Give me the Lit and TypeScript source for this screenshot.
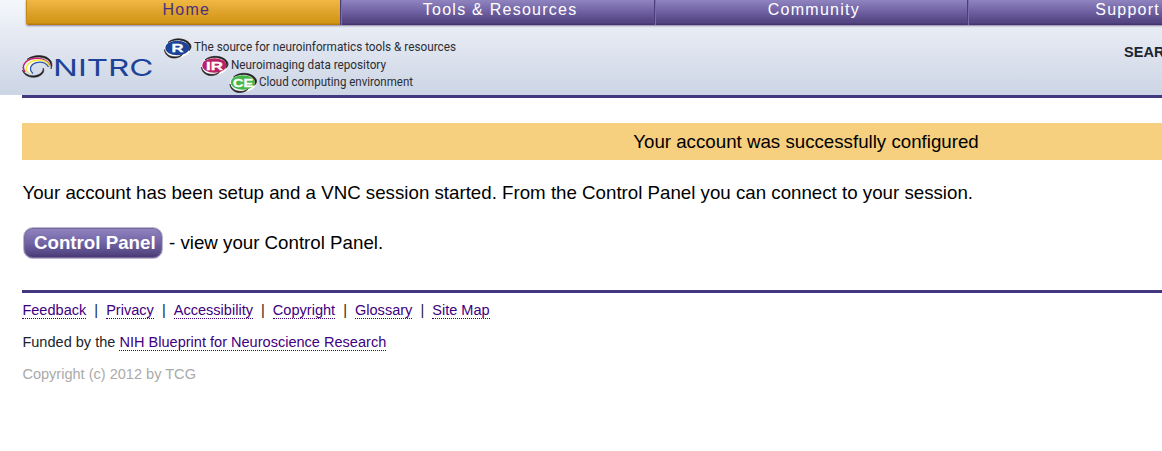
import { LitElement, html, css, svg } from "lit";
import { customElement } from "lit/decorators.js";

const TABS = ["Home", "Tools & Resources", "Community", "Support"];
const LINKS = ["Feedback", "Privacy", "Accessibility", "Copyright", "Glossary", "Site Map"];

@customElement("nitrc-logo")
class NitrcLogo extends LitElement {
  static styles = css`
    :host { display: block; height: 60px; }
    svg { display: block; }
    .word { font: 400 23.500px Inter, "Liberation Sans", sans-serif; fill: #1d4297; }
    .badge { font: 700 11.500px "Liberation Sans", sans-serif; fill: #fff; stroke: #fff; stroke-width: 0.3; }
    .tag { font: 400 13.500px Roboto, "Liberation Sans", sans-serif; fill: #2b2d35; }
  `;

  badge(x: number, y: number, label: string, color: string, width: number) {
    return svg`<g transform="translate(${x} ${y})">
      <ellipse cx="13.6" cy="10.3" rx="13.2" ry="9" fill="#fff"/>
      <path d="M4 4.500C9 -.3 19 -.3 24 3.800C27.800 6.800 27.800 9.800 25 12.800C26.300 9.500 25.500 6.500 21.500 3.800C16 .9 9 1.500 4 4.500Z" fill="#221f20" stroke="#221f20" stroke-width=".7"/>
      <path d="M.4 11.500C1 17.500 6 20.600 11.500 20C15.500 19.500 18.500 17.500 19 15.500C16.500 18.600 12.500 19.300 8.500 18.600C4 17.800 1.500 15 .4 11.500Z" fill="#221f20" stroke="#221f20" stroke-width=".6"/>
      <ellipse cx="13.300" cy="10" rx="12" ry="7.300" fill="${color}"/>
      <text class="badge" x="${13.6 - width / 2}" y="14" textLength="${width}" lengthAdjust="spacingAndGlyphs">${label}</text>
    </g>`;
  }

  render() {
    return html`<svg width="440" height="60" viewBox="22 35 440 60" role="img" aria-label="NITRC">
      <g fill="none">
        <path d="M27 72C22.500 66 27 59.500 37 58.500C43 58 48 60.500 50 65L46 64C42 61.500 35 62 32 65C30 68 31 71 34 73.500Z" fill="#fff"/>
        <path d="M27 59.500C32 55 43 54 48.500 58.500C52.500 61.500 52.500 65 51 69C51.500 64 50 61 46.500 59C41 56 33 56.500 27 59.500Z" fill="#221f20" stroke="#221f20" stroke-width=".6"/>
        <path d="M25 72C20.500 66 25.500 59.500 34 58.500C42 57.500 48 60.500 50 66" stroke="#c32172" stroke-width="1.400"/>
        <path d="M28.500 73C23.500 68 28 61 37 60.200C43 59.700 47.500 62 49.500 66" stroke="#f4e63a" stroke-width="1.500"/>
        <path d="M33 73.500C28 69 31 63.200 38 62.300C43 61.800 46.500 63.500 48.500 67" stroke="#2454a5" stroke-width="1.300"/>
        <path d="M22.300 70C24 76 31 78.200 36.500 77C42 75.800 45.500 71.500 43 68C43.500 71.500 40.500 74.500 35.500 75.600C30.500 76.500 25 74.500 22.300 70Z" fill="#221f20" stroke="#221f20" stroke-width=".5"/>
      </g>
      <text class="word" x="53" y="75.500" textLength="100.500" lengthAdjust="spacingAndGlyphs">NITRC</text>
      ${this.badge(164, 38, "R", "#1d4297", 12)}
      ${this.badge(201, 55.5, "IR", "#b92065", 17)}
      ${this.badge(229.5, 72.5, "CE", "#46b649", 20)}
      <text class="tag" x="194" y="51" textLength="262" lengthAdjust="spacingAndGlyphs">The source for neuroinformatics tools &amp; resources</text>
      <text class="tag" x="231" y="68.500" textLength="155" lengthAdjust="spacingAndGlyphs">Neuroimaging data repository</text>
      <text class="tag" x="259" y="86" textLength="154" lengthAdjust="spacingAndGlyphs">Cloud computing environment</text>
    </svg>`;
  }
}

@customElement("app-root")
class AppRoot extends LitElement {
  static styles = css`
    :host {
      display: block; height: 451px; overflow: hidden; background: #fff; color: #000;
      font-family: "Liberation Sans", Arial, sans-serif; white-space: nowrap;
    }
    * { box-sizing: border-box; }
    .page { width: 1590px; }
    header { height: 95px; background: linear-gradient(#f5f7fa 0, #e8ecf4 28px, #ccd5e5 95px); }
    nav {
      display: flex; height: 25px; margin-left: 26px; width: 1256px;
      border-bottom-left-radius: 2px; box-shadow: 0 1px 2px #8d87a8;
    }
    .tab {
      width: 313.750px; height: 25px; padding: 0 0 6px 6px; display: flex; align-items: center; justify-content: center;
      font-size: 16px; letter-spacing: 1.250px; color: #fff;
      background: linear-gradient(#9084c0, #7163a4 11px, #554783 21px, #554783 23px, #43336f 24px);
      border-left: 1px solid #4d3d7a; box-shadow: inset 1px 0 #7a6ca8;
    }
    .tab.active {
      color: #49307c; border-left: 1px solid #c28a16; border-bottom-left-radius: 2px; box-shadow: none;
      background: linear-gradient(#f0b843, #e1a52e 11px, #d29516 22px, #d29516 23px, #b77b0d 24px);
    }
    .masthead { display: flex; height: 70px; padding: 10px 0 0 22px; }
    .search { margin: 7px 0 0 662px; font: bold 14.550px/20px "Liberation Sans", sans-serif; color: #20242e; }
    main { margin-left: 22px; border-top: 3px solid #42387f; padding-top: 25px; font-size: 18.720px; }
    .notice { height: 37px; line-height: 37px; background: #f6cf7f; text-align: center; }
    p { margin: 0; }
    .intro { line-height: 24px; margin-top: 21px; padding-left: 0.400px; }
    .action { display: flex; align-items: center; margin-top: 21px; height: 33px; }
    .button {
      width: 140px; height: 32px; border-radius: 10px; border: 1px solid #bbb7cb; padding-left: 10px;
      color: #fff; font-weight: bold; line-height: 30px; margin: 0 6px 0 1px;
      box-shadow: inset 0 0 0 1px #75699f;
      background: linear-gradient(#9185c0, #7163a4 50%, #554783 85%, #43336f);
    }
    footer { margin: 31px 0 0 22px; border-top: 3px solid #42387f; padding: 7px 0 0 0.400px; font-size: 14.560px; color: #20242e; }
    .links { display: flex; }
    .sep { margin: 0 8.050px; }
    .line { height: 20px; line-height: 20px; margin-bottom: 12px; }
    .link { color: #400080; }
    .link span { display: inline-block; height: 19px; border-bottom: 1px dotted #400080; vertical-align: top; }
    .copy { color: #aaa; }
  `;

  render() {
    return html`<div class="page">
      <header>
        <nav>${TABS.map((t, i) => html`<div class="tab ${i === 0 ? "active" : ""}">${t}</div>`)}</nav>
        <div class="masthead"><nitrc-logo></nitrc-logo><div class="search">SEARCH</div></div>
      </header>
      <main>
        <div class="notice">Your account was successfully configured</div>
        <p class="intro">Your account has been setup and a VNC session started. From the Control Panel you can connect to your session.</p>
        <div class="action"><div class="button">Control Panel</div><span>- view your Control Panel.</span></div>
      </main>
      <footer>
        <div class="line links">${LINKS.map((l, i) => html`${i ? html`<span class="sep">|</span>` : ""}<a class="link"><span>${l}</span></a>`)}</div>
        <div class="line">Funded by the <a class="link"><span>NIH Blueprint for Neuroscience Research</span></a></div>
        <div class="line copy">Copyright (c) 2012 by TCG</div>
      </footer>
    </div>`;
  }
}
